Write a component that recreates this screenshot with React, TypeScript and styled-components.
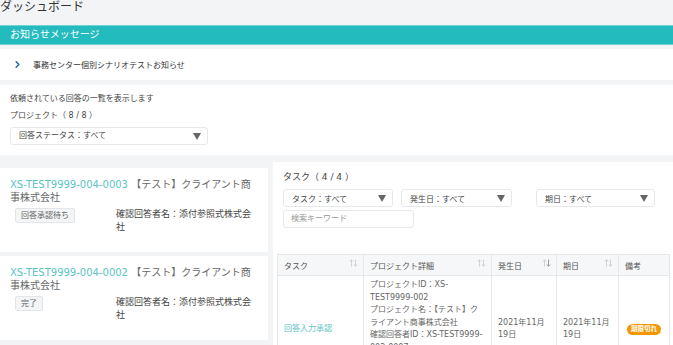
import React from 'react'
import styled, { createGlobalStyle } from 'styled-components'
import { ChevronRight } from 'lucide-react'

const GlobalStyle = createGlobalStyle`
  html, body {
    margin: 0;
    padding: 0;
    background: #f2f4f5;
    font-family: 'DejaVu Sans', 'Noto Sans CJK JP', sans-serif;
    color: #555;
    overflow: hidden;
  }
`

const Page = styled.div`
  width: 673px;
  height: 345px;
  overflow: hidden;
`

const Title = styled.h1`
  margin: 0;
  height: 25px;
  font-size: 12px;
  line-height: 15px;
  font-weight: 400;
  color: #333;
`

const NoticeBar = styled.div`
  height: 18px;
  border-top: 1px solid #6fd3d4;
  border-bottom: 1px solid #6fd3d4;
  background: #23bbbd;
  color: #fff;
  font-size: 10px;
  line-height: 17px;
  padding-left: 10px;
`

const NoticeBox = styled.div`
  margin-top: 4px;
  height: 31px;
  background: #fff;
  display: flex;
  align-items: center;
  gap: 10px;
  padding-left: 12px;
  font-size: 8px;
  color: #333;
`

const Panel = styled.div`
  margin-top: 5px;
  height: 70px;
  box-sizing: border-box;
  background: #fff;
  padding: 8px 10px 0;
  font-size: 8px;
  color: #444;
`

const Line = styled.div<{ $gap?: number }>`
  line-height: 12px;
  margin-top: ${p => p.$gap ?? 0}px;
`

const Select = styled.div<{ $w: number; $ml?: number }>`
  width: ${p => p.$w}px;
  margin-left: ${p => p.$ml ?? 0}px;
  height: 18px;
  box-sizing: border-box;
  border: 1px solid #e6e8ea;
  border-radius: 3px;
  display: flex;
  align-items: center;
  justify-content: space-between;
  padding: 0 6px 0 8px;
  font-size: 8px;
  color: #444;
  background: #fff;
`

const Arrow = styled.span`
  width: 0;
  height: 0;
  border-left: 4px solid transparent;
  border-right: 4px solid transparent;
  border-top: 7px solid #666;
`

const Content = styled.div`
  margin-top: 7px;
  display: flex;
  gap: 5px;
  align-items: flex-start;
`

const LeftCol = styled.div`
  width: 268px;
  padding-top: 6px;
  display: flex;
  flex-direction: column;
  gap: 4px;
`

const Card = styled.div`
  height: 84px;
  box-sizing: border-box;
  background: #fff;
  padding: 10px 8px 0 10px;
`

const CardTitle = styled.div`
  font-size: 10px;
  line-height: 13px;
  color: #666;
`

const Code = styled.span`
  color: #5cc3c5;
`

const CardRow = styled.div`
  display: grid;
  grid-template-columns: 106px 142px;
  margin-top: 4px;
`

const Badge = styled.span`
  justify-self: start;
  margin-left: 5px;
  height: 15px;
  box-sizing: border-box;
  padding: 0 5px;
  border: 1px solid #e3e6e8;
  border-radius: 2px;
  background: #f3f5f6;
  font-size: 8px;
  line-height: 13px;
  color: #666;
`

const Respondent = styled.div`
  font-size: 9px;
  line-height: 13px;
  color: #444;
`

const RightCol = styled.div`
  width: 400px;
  height: 190px;
  box-sizing: border-box;
  background: #fff;
  padding: 9px 4px 0 10px;
`

const FilterLabel = styled.div`
  font-size: 9px;
  line-height: 12px;
  color: #444;
`

const FilterRow = styled.div`
  margin-top: 6px;
  display: flex;
`

const Search = styled.div`
  margin-top: 3px;
  width: 131px;
  height: 18px;
  box-sizing: border-box;
  border: 1px solid #e6e8ea;
  border-radius: 3px;
  padding-left: 7px;
  font-size: 8px;
  line-height: 16px;
  color: #999;
`

const Table = styled.table`
  margin: 26px 0 0 -6px;
  width: 392px;
  border-collapse: collapse;
  table-layout: fixed;
  font-size: 8px;
  color: #666;
`

const Th = styled.th<{ $w: number }>`
  width: ${p => p.$w}px;
  height: 21px;
  box-sizing: border-box;
  background: #f5f7f8;
  border: 1px solid #e5e8ea;
  font-weight: 400;
  text-align: left;
  padding: 0 6px;
  position: relative;
  color: #555;
`

const Td = styled.td`
  border: 1px solid #e5e8ea;
  padding: 3px 6px;
  vertical-align: middle;
  line-height: 12.5px;
  color: #666;
`

const Link = styled.span`
  color: #5cc3c5;
`

const Sort = styled.svg`
  position: absolute;
  right: 5px;
  top: 4px;
`

const Expired = styled.span`
  display: inline-block;
  white-space: nowrap;
  margin-left: 2px;
  padding: 0 4px;
  height: 11px;
  line-height: 11px;
  border-radius: 6px;
  background: #f39800;
  color: #fff;
  font-size: 6.5px;
  font-weight: 700;
`

const SortIcon = ({ active }: { active?: boolean }) => (
  <Sort width="9" height="8" viewBox="0 0 9 8">
    <g fill="none" strokeWidth="0.9" stroke="#c9ced2">
      <path d="M2.5 7.5V0.8M0.8 2.5L2.5 0.8L4.2 2.5" />
      <path
        d="M6.5 0.5V7.2M4.8 5.5L6.5 7.2L8.2 5.5"
        stroke={active ? '#8a9196' : '#c9ced2'}
      />
    </g>
  </Sort>
)

type Item = { code: string; status: string }

const items: Item[] = [
  { code: 'XS-TEST9999-004-0003', status: '回答承認待ち' },
  { code: 'XS-TEST9999-004-0002', status: '完了' },
]

const App = () => (
  <Page>
    <GlobalStyle />
    <Title>ダッシュボード</Title>
    <NoticeBar>お知らせメッセージ</NoticeBar>
    <NoticeBox>
      <ChevronRight size={11} strokeWidth={3} color="#1d5fa6" />
      事務センター個別シナリオテストお知らせ
    </NoticeBox>
    <Panel>
      <Line>依頼されている回答の一覧を表示します</Line>
      <Line $gap={5}>プロジェクト（ 8 / 8 ）</Line>
      <Line $gap={5}>
        <Select $w={198}>
          回答ステータス：すべて
          <Arrow />
        </Select>
      </Line>
    </Panel>
    <Content>
      <LeftCol>
        {items.map(item => (
          <Card key={item.code}>
            <CardTitle>
              <Code>{item.code}</Code> 【テスト】クライアント商事株式会社
            </CardTitle>
            <CardRow>
              <Badge>{item.status}</Badge>
              <Respondent>確認回答者名：添付参照式株式会社</Respondent>
            </CardRow>
          </Card>
        ))}
      </LeftCol>
      <RightCol>
        <FilterLabel>タスク（ 4 / 4 ）</FilterLabel>
        <FilterRow>
          <Select $w={110}>
            タスク：すべて
            <Arrow />
          </Select>
          <Select $w={111} $ml={8}>
            発生日：すべて
            <Arrow />
          </Select>
          <Select $w={119} $ml={24}>
            期日：すべて
            <Arrow />
          </Select>
        </FilterRow>
        <Search>検索キーワード</Search>
        <Table>
          <thead>
            <tr>
              <Th $w={86}>
                タスク
                <SortIcon />
              </Th>
              <Th $w={128}>
                プロジェクト詳細
                <SortIcon />
              </Th>
              <Th $w={65}>
                発生日
                <SortIcon active />
              </Th>
              <Th $w={62}>
                期日
                <SortIcon />
              </Th>
              <Th $w={51}>備考</Th>
            </tr>
          </thead>
          <tbody>
            <tr>
              <Td>
                <Link>回答入力承認</Link>
              </Td>
              <Td>
                プロジェクトID：XS-TEST9999-002
                <br />
                プロジェクト名：【テスト】クライアント商事株式会社
                <br />
                確認回答者ID：XS-TEST9999-002-0007
                <br />
                確認回答者名：添付参照式株式会社
              </Td>
              <Td>2021年11月19日</Td>
              <Td>2021年11月19日</Td>
              <Td>
                <Expired>期限切れ</Expired>
              </Td>
            </tr>
          </tbody>
        </Table>
      </RightCol>
    </Content>
  </Page>
)

export default App
